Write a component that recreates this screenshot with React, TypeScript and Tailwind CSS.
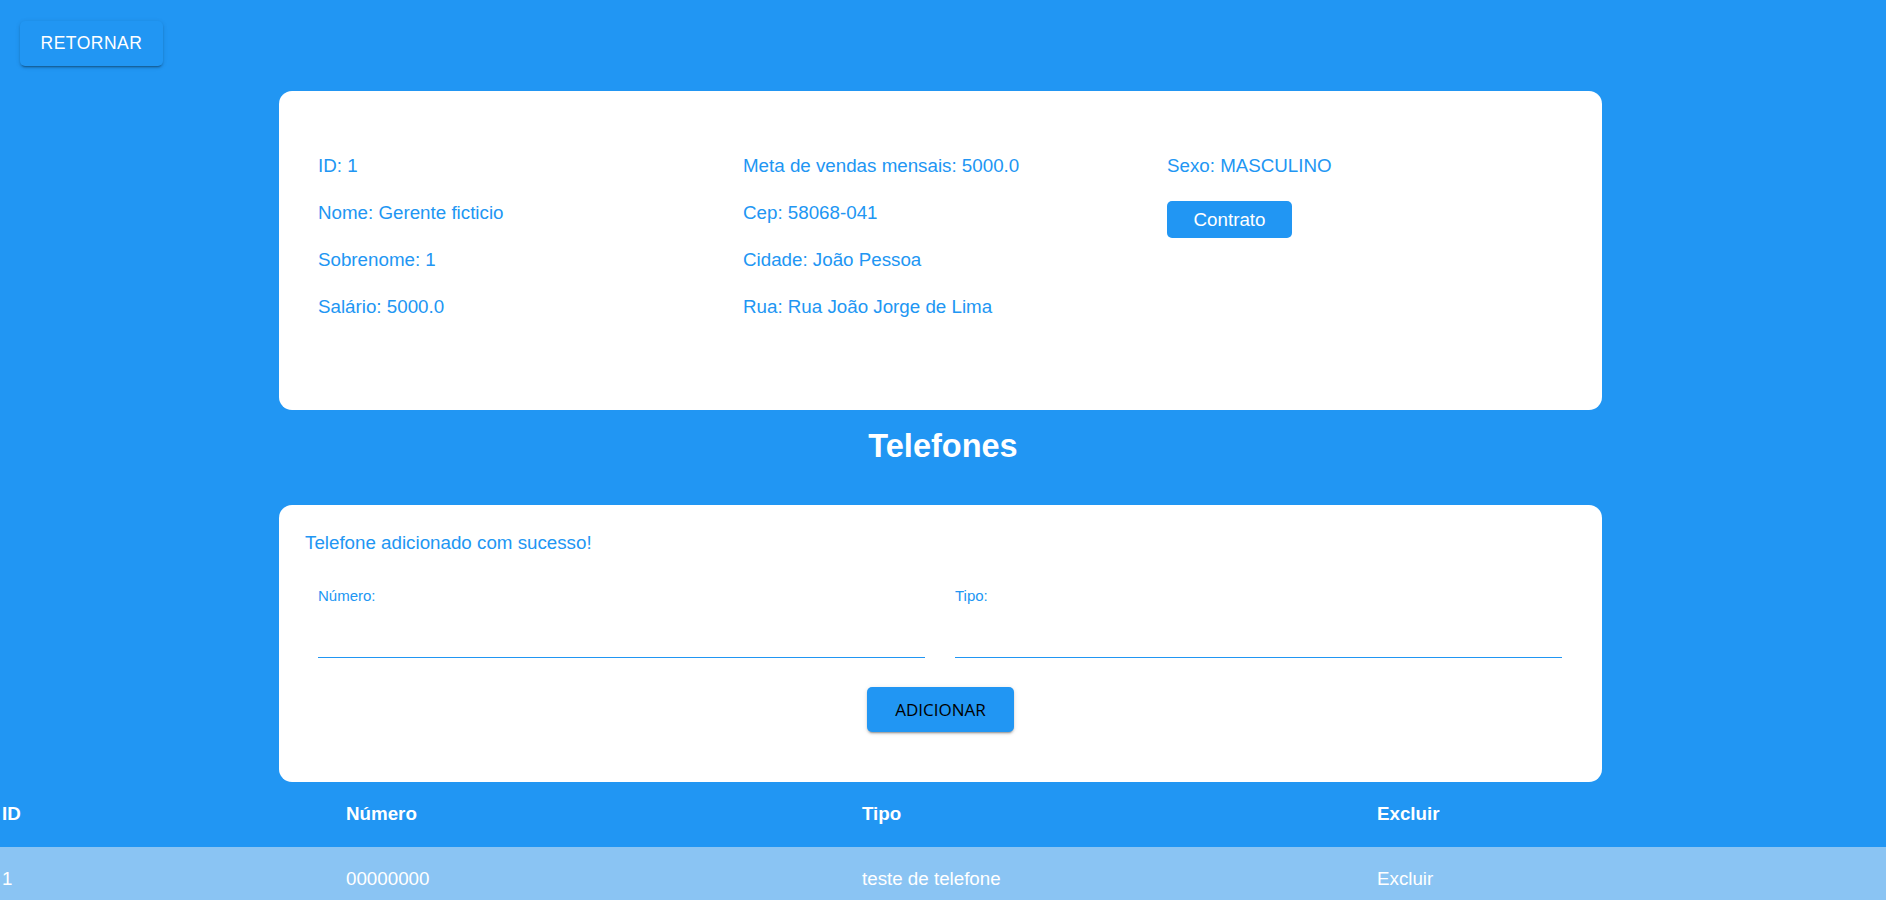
import React from "react";

const info1 = ["ID: 1", "Nome: Gerente ficticio", "Sobrenome: 1", "Salário: 5000.0"];
const info2 = ["Meta de vendas mensais: 5000.0", "Cep: 58068-041", "Cidade: João Pessoa", "Rua: Rua João Jorge de Lima"];

const telefones = [{ id: 1, numero: "00000000", tipo: "teste de telefone" }];

const muiShadow =
  "shadow-[0_3px_1px_-2px_rgba(0,0,0,0.2),0_2px_2px_0_rgba(0,0,0,0.14),0_1px_5px_0_rgba(0,0,0,0.12)]";

function Field({ label }: { label: string }) {
  return (
    <div className="flex flex-col">
      <label className="text-[15px] leading-[17px] text-[#2196f3]">{label}</label>
      <input
        type="text"
        className="mt-[8px] h-[46px] border-b border-[#2196f3] bg-transparent text-[18.75px] text-[#222] outline-none"
      />
    </div>
  );
}

export default function App() {
  return (
    <div className="min-h-screen bg-[#2196f3] pb-10 font-['Liberation_Sans',Arial,sans-serif]">
      <div className="pl-[20px] pt-[21px]">
        <button
          className={`h-[45px] w-[143px] rounded-[5px] bg-[#2196f3] text-[17.5px] uppercase tracking-[0.5px] text-white ${muiShadow}`}
        >
          Retornar
        </button>
      </div>

      {/* dados do gerente */}
      <div className="ml-[279px] mt-[25px] w-[1323px] rounded-[13px] bg-white pb-[91px] pl-[39px] pt-[63px]">
        <div className="grid grid-cols-[425px_424px_1fr] text-[18.75px] leading-[24px] text-[#2196f3]">
          <div className="flex flex-col gap-[23px]">
            {info1.map((t) => (
              <p key={t}>{t}</p>
            ))}
          </div>
          <div className="flex flex-col gap-[23px]">
            {info2.map((t) => (
              <p key={t}>{t}</p>
            ))}
          </div>
          <div className="flex flex-col items-start gap-[23px]">
            <p>Sexo: MASCULINO</p>
            <button className="h-[37px] w-[125px] rounded-[5px] bg-[#2196f3] text-[18.75px] text-white">
              Contrato
            </button>
          </div>
        </div>
      </div>

      <h1 className="mt-[18px] text-center text-[32.5px] font-bold leading-[37px] text-white">Telefones</h1>

      {/* novo telefone */}
      <div className="ml-[279px] mt-[40px] w-[1323px] rounded-[13px] bg-white px-[26px] pb-[50px] pt-[26px]">
        <p className="text-[18.75px] leading-[24px] text-[#2196f3]">Telefone adicionado com sucesso!</p>
        <div className="mx-[13px] mt-[32px] grid grid-cols-2 gap-[30px] pr-[1px]">
          <Field label="Número:" />
          <Field label="Tipo:" />
        </div>
        <div className="mt-[29px] flex justify-center">
          <button
            className={`h-[45px] w-[147px] rounded-[5px] bg-[#2196f3] font-['Open_Sans',sans-serif] text-[17px] text-black ${muiShadow}`}
          >
            ADICIONAR
          </button>
        </div>
      </div>

      {/* lista */}
      <div className="w-full text-[18.75px] text-white">
        <div className="grid h-[65px] grid-cols-[344px_516px_515px_1fr] items-center pl-[2px] font-bold">
          <span>ID</span>
          <span>Número</span>
          <span>Tipo</span>
          <span>Excluir</span>
        </div>
        {telefones.map((t) => (
          <div
            key={t.id}
            className="grid h-[64px] grid-cols-[344px_516px_515px_1fr] items-center bg-[#8ac4f3] pl-[2px]"
          >
            <span>{t.id}</span>
            <span>{t.numero}</span>
            <span>{t.tipo}</span>
            <span className="cursor-pointer">Excluir</span>
          </div>
        ))}
      </div>
    </div>
  );
}
